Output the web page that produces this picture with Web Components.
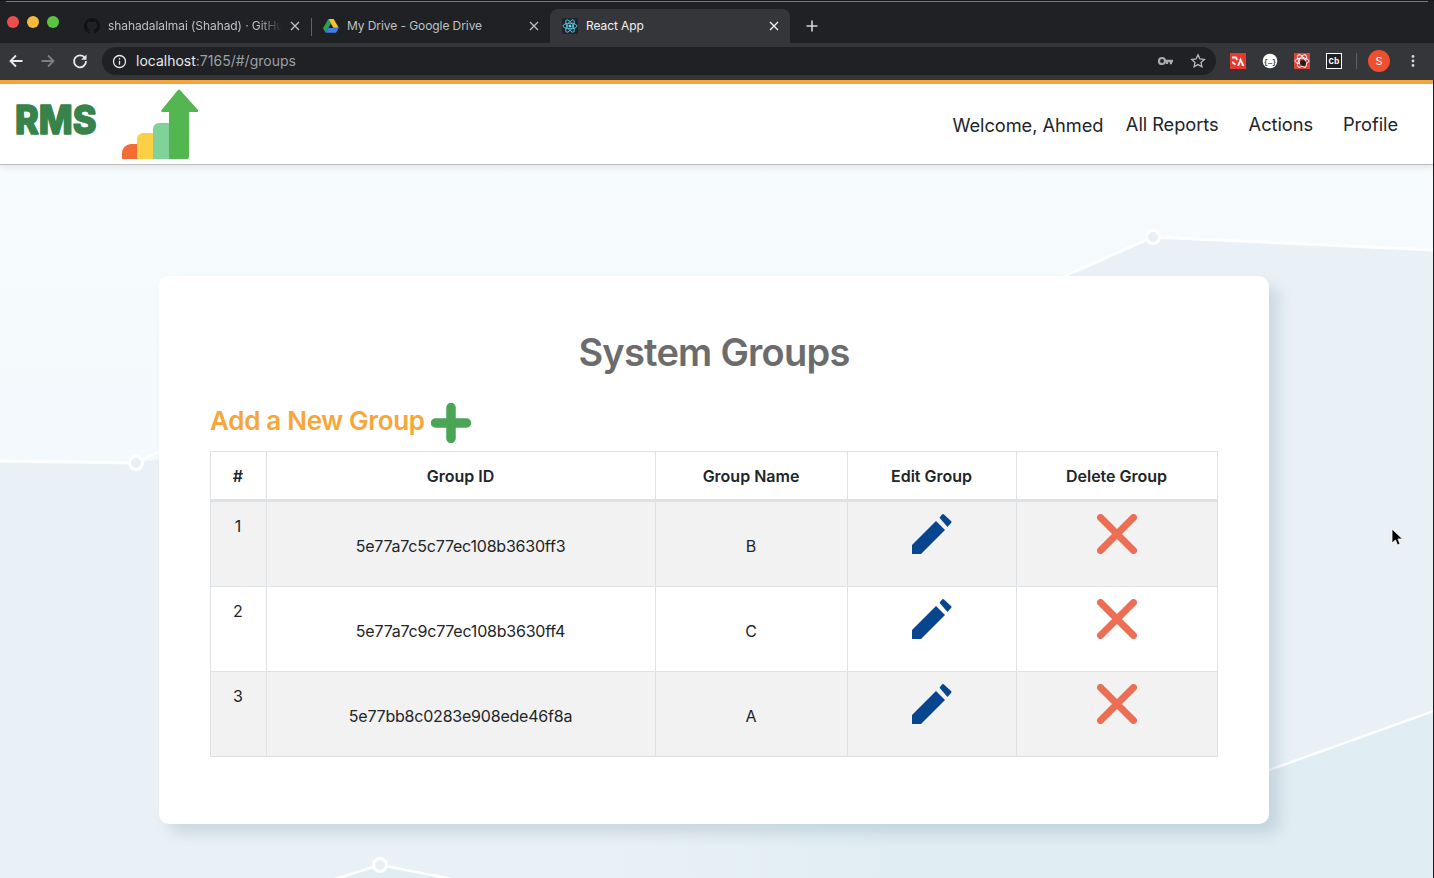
<!DOCTYPE html>
<html>
<head>
<meta charset="utf-8">
<title>React App</title>
<style>
  html,body{margin:0;height:100%;overflow:hidden;background:#e9f1f7;}
  body{font-family:Inter,"Liberation Sans",sans-serif;}
</style>
</head>
<body>

<browser-frame>
  <browser-tab slot="tabs" style="width:235px;padding-left:8px" closed-fade>
    <svg slot="icon" width="16" height="16" viewBox="0 0 16 16"><path fill="#111214" d="M8 0a8 8 0 0 0-2.5 15.6c.4.1.5-.2.5-.4v-1.400c-2.200.5-2.700-1-2.700-1-.4-.9-.9-1.200-.9-1.200-.7-.5.1-.5.1-.5.8.1 1.200.8 1.200.8.7 1.200 1.900.9 2.300.7.1-.5.3-.9.5-1.100-1.800-.2-3.600-.9-3.600-4 0-.9.3-1.600.8-2.100-.1-.2-.4-1 .1-2.100 0 0 .7-.2 2.200.8a7.600 7.600 0 0 1 4 0c1.500-1 2.200-.8 2.200-.8.5 1.100.2 1.900.1 2.100.5.5.8 1.200.8 2.100 0 3.100-1.900 3.800-3.700 4 .3.3.6.8.6 1.500v2.200c0 .2.1.5.6.4A8 8 0 0 0 8 0z"/></svg>
    shahadalalmai (Shahad) · GitHub
  </browser-tab>
  <browser-tab slot="tabs" style="width:239px" separated>
    <svg slot="icon" width="16" height="16" viewBox="0 0 16 16"><path fill="#f6c02d" d="M5.300 1h5.400l5 8.700h-5.400z"/><path fill="#2f9e55" d="M5.300 1 0 10.200l2.700 4.600L8 5.600z"/><path fill="#3f7ee8" d="M5.200 10h10.500l-2.700 4.800H2.700z"/></svg>
    My Drive - Google Drive
  </browser-tab>
  <browser-tab slot="tabs" style="width:240px" active>
    <svg slot="icon" width="16" height="16" viewBox="0 0 16 16"><rect width="16" height="16" rx="1" fill="#20232a"/><g fill="none" stroke="#61dafb" stroke-width=".8"><ellipse cx="8" cy="8" rx="7" ry="2.800"/><ellipse cx="8" cy="8" rx="7" ry="2.800" transform="rotate(60 8 8)"/><ellipse cx="8" cy="8" rx="7" ry="2.800" transform="rotate(120 8 8)"/></g><circle cx="8" cy="8" r="1.500" fill="#61dafb"/></svg>
    React App
  </browser-tab>
</browser-frame>

<app-nav user="Ahmed">
  <nav-link>All Reports</nav-link>
  <nav-link>Actions</nav-link>
  <nav-link>Profile</nav-link>
</app-nav>

<page-body>
  <groups-card heading="System Groups">
    <group-row head index="#" group-id="Group ID" group-name="Group Name" edit="Edit Group" del="Delete Group"></group-row>
    <group-row striped index="1" group-id="5e77a7c5c77ec108b3630ff3" group-name="B"></group-row>
    <group-row index="2" group-id="5e77a7c9c77ec108b3630ff4" group-name="C"></group-row>
    <group-row striped last index="3" group-id="5e77bb8c0283e908ede46f8a" group-name="A"></group-row>
  </groups-card>
</page-body>

<window-edge></window-edge>

<script>
class BrowserFrame extends HTMLElement {
  constructor(){
    super();
    this.attachShadow({ mode:"open" });
    this.shadowRoot.innerHTML = `
      <style>
        :host{display:block;background:#202124;font:12px Inter,"Liberation Sans",sans-serif;color:#e8eaed;}
        .strip{height:43px;box-sizing:border-box;border-top:1px solid #17181a;display:flex;align-items:flex-start;position:relative;}
        .strip::before{content:"";position:absolute;left:6px;right:6px;top:0;height:1px;background:#77797c;}
        .lights{width:76px;flex:none;display:flex;gap:8px;padding:15px 0 0 7px;box-sizing:border-box;}
        .lights i{width:12px;height:12px;border-radius:50%;}
        .tabs{display:flex;margin-top:8px;}
        .plus{margin:18px 0 0 15px;width:14px;height:14px;}
        .bar{height:37px;box-sizing:border-box;background:#35363a;display:flex;align-items:flex-start;padding-top:4px;position:relative;}
        .nav{display:flex;align-items:center;gap:16px;width:102px;height:28px;padding-left:8px;box-sizing:border-box;flex:none;}
        .omni{width:1114px;height:28px;border-radius:14px;background:#202124;display:flex;align-items:center;box-sizing:border-box;padding:0 10px;flex:none;font-size:14px;line-height:26px;}
        .url{margin-left:9px;color:#9aa0a6;padding-bottom:1px;}
        .url b{font-weight:400;color:#e8eaed;}
        .omni .right{margin-left:auto;display:flex;gap:17px;align-items:center;}
        .ext{display:flex;align-items:center;margin-left:14px;height:28px;gap:16px;}
        .ext svg{display:block;}
        .ext text{font-family:"Liberation Mono",monospace;font-weight:700;}
        .sep{width:1px;height:16px;background:#5f6368;margin:0 -2px 0 -2px;}
        .avatar{width:22px;height:22px;border-radius:50%;background:#ee4f2f;color:#fff;font-size:11px;display:flex;align-items:center;justify-content:center;margin-left:-3px;}
        .dots{margin-left:5px;}
        .rule{height:4px;background:#f7a63a;}
      </style>
      <div class="strip">
        <div class="lights"><i style="background:#ed4f4c"></i><i style="background:#f4b93e"></i><i style="background:#5ac53f"></i></div>
        <div class="tabs"><slot name="tabs"></slot></div>
        <svg class="plus" viewBox="0 0 14 14"><path d="M7 1.500v11M1.500 7h11" stroke="#d5d6d8" stroke-width="1.600"/></svg>
      </div>
      <div class="bar">
        <div class="nav">
          <svg width="16" height="16" viewBox="0 0 16 16" fill="none" stroke="#e8eaed" stroke-width="1.800"><path d="M14.500 8H2.500M8 2.500 2.500 8 8 13.500"/></svg>
          <svg width="16" height="16" viewBox="0 0 16 16" fill="none" stroke="#7d7f83" stroke-width="1.800"><path d="M1.500 8h12M8 2.500 13.500 8 8 13.500"/></svg>
          <svg width="16" height="16" viewBox="0 0 16 16"><path d="M13 5A6 6 0 1 0 14 8" fill="none" stroke="#e8eaed" stroke-width="1.800"/><path d="M14.500 1.500v5.300H9.200z" fill="#e8eaed"/></svg>
        </div>
        <div class="omni">
          <svg width="15" height="15" viewBox="0 0 15 15" fill="none" stroke="#e8eaed" stroke-width="1.300"><circle cx="7.500" cy="7.500" r="6"/><path d="M7.500 6.700v4M7.500 4v1.400"/></svg>
          <span class="url"><b>localhost</b>:7165/#/groups</span>
          <span class="right">
            <svg width="15" height="10" viewBox="0 0 15 10"><circle cx="4" cy="5" r="3" fill="none" stroke="#a9abae" stroke-width="2.200"/><path d="M7 3.800h8v2.400h-1v2h-2.200v-2H10V8H8V6.200H7z" fill="#a9abae"/></svg>
            <svg width="16" height="16" viewBox="0 0 16 16" fill="none" stroke="#b9babd" stroke-width="1.300"><path d="m8 1.800 1.900 4.100 4.400.5-3.300 3 .9 4.400L8 11.600l-3.900 2.200.9-4.400-3.300-3 4.400-.5z"/></svg>
          </span>
        </div>
        <div class="ext">
          <svg width="16" height="16" viewBox="0 0 16 16"><rect width="16" height="16" fill="#e8392f"/><path d="M2 3.500h4.500L8 6.500 6.500 7.500 5.300 5.400H2zM2 8l4 3-1 1.300-3-2.300zM7.200 13l3.200-8.500L14.500 13h-2.200l-1.800-4-1.500 4z" fill="#fff"/></svg>
          <svg width="16" height="16" viewBox="0 0 16 16"><circle cx="8" cy="8" r="7.300" fill="#fff"/><text x="8" y="10.500" font-size="7" text-anchor="middle" fill="#333">{…}</text></svg>
          <svg width="16" height="16" viewBox="0 0 16 16"><rect width="16" height="16" fill="#d9443d"/><g fill="none" stroke="#fff" stroke-width="1"><ellipse cx="8" cy="8" rx="7" ry="3"/><ellipse cx="8" cy="8" rx="7" ry="3" transform="rotate(60 8 8)"/><ellipse cx="8" cy="8" rx="7" ry="3" transform="rotate(120 8 8)"/></g><circle cx="9" cy="10" r="3" fill="#2a1a1a"/></svg>
          <svg width="16" height="16" viewBox="0 0 16 16"><rect x=".5" y=".5" width="15" height="15" fill="#202124" stroke="#fff"/><text x="8" y="11" font-size="9" text-anchor="middle" fill="#fff">Cb</text></svg>
          <span class="sep"></span>
          <span class="avatar">S</span>
          <svg class="dots" width="4" height="14" viewBox="0 0 4 14" fill="#d5d6d8"><circle cx="2" cy="2.500" r="1.400"/><circle cx="2" cy="7" r="1.400"/><circle cx="2" cy="11.500" r="1.400"/></svg>
        </div>
      </div>
      <div class="rule"></div>
    `;
  }
}
customElements.define("browser-frame", BrowserFrame);

class BrowserTab extends HTMLElement {
  constructor(){
    super();
    this.attachShadow({ mode:"open" });
    this.shadowRoot.innerHTML = `
      <style>
        :host{display:inline-flex;height:34px;box-sizing:border-box;align-items:center;padding:0 11px 0 12px;position:relative;color:#bdc1c6;font-size:12px;vertical-align:top;letter-spacing:-.08px;}
        :host([active]){background:#35363a;color:#f1f3f4;border-radius:8px 8px 0 0;height:39px;padding-bottom:5px;}
        :host([separated])::before{content:"";position:absolute;left:0;top:9px;height:18px;width:1px;background:#5f6368;}
        .icon{display:flex;width:16px;flex:none;margin-right:8px;}
        .label{flex:1;white-space:nowrap;overflow:hidden;min-width:0;padding-bottom:2px;}
        :host([closed-fade]) .label{-webkit-mask-image:linear-gradient(90deg,#000 86%,transparent);}
        svg{flex:none;margin-left:8px;}
      </style>
      <span class="icon"><slot name="icon"></slot></span>
      <span class="label"><slot></slot></span>
      <svg width="10" height="10" viewBox="0 0 10 10"><path d="m1 1 8 8M9 1 1 9" stroke="currentColor" stroke-width="1.300"/></svg>
    `;
  }
}
customElements.define("browser-tab", BrowserTab);

class AppNav extends HTMLElement {
  constructor(){
    super();
    this.attachShadow({ mode:"open" });
    this.shadowRoot.innerHTML = `
      <style>
        :host{display:flex;height:81px;box-sizing:border-box;background:#fff;border-bottom:1px solid #bdbfc0;box-shadow:0 2px 7px rgba(0,0,0,.1);align-items:center;position:relative;z-index:1;}
        .brand{display:flex;align-items:flex-start;height:80px;flex:none;}
        .word{display:block;width:122px;height:80px;flex:none;}
        .word text{font:800 40px Inter,"Liberation Sans",sans-serif;fill:#37834a;stroke:#37834a;stroke-width:1.600px;stroke-linejoin:round;}
        .mark{margin-top:5px;display:block;}
        .links{margin-left:auto;display:flex;align-items:center;padding-right:36px;font-size:18.240px;color:#212529;}
        .welcome{margin-right:22.500px;padding-top:2px;letter-spacing:-.05px;}
        ::slotted(nav-link){margin-left:30px;}
        ::slotted(nav-link:first-child){margin-left:0;}
      </style>
      <div class="brand">
        <svg class="word" viewBox="0 0 122 80"><text x="15" y="50" textLength="81.500" lengthAdjust="spacingAndGlyphs">RMS</text></svg>
        <svg class="mark" width="76" height="71" viewBox="0 0 76 71">
          <path d="M0 70V64a9 9 0 0 1 9-9h7v15z" fill="#f26d36"/>
          <path d="M15 70V50a6 6 0 0 1 6-6h12v26z" fill="#fbd044"/>
          <path d="M31 70V40a6 6 0 0 1 6-6h13v36z" fill="#7fd29a"/>
          <path d="M47 70V23H40.500q-2 0-1-2L56 1q1-1 2 0l18 20q1 2-1 2H67v45q0 2-2 2z" fill="#54b650"/>
        </svg>
      </div>
      <div class="links">
        <span class="welcome">Welcome, ${this.getAttribute("user")}</span>
        <slot></slot>
      </div>
    `;
  }
}
customElements.define("app-nav", AppNav);

class NavLink extends HTMLElement {
  constructor(){
    super();
    this.attachShadow({ mode:"open" });
    this.shadowRoot.innerHTML = `
      <style>:host{display:block;color:#212529;font-size:18.240px;letter-spacing:-.05px;}</style>
      <slot></slot>
    `;
  }
}
customElements.define("nav-link", NavLink);

class PageBody extends HTMLElement {
  constructor(){
    super();
    this.attachShadow({ mode:"open" });
    this.shadowRoot.innerHTML = `
      <style>
        :host{display:block;position:relative;height:713px;box-sizing:border-box;padding:111px 0 0 159px;overflow:hidden;background:#e9f1f7;}
        .art{position:absolute;left:0;top:0;}
        ::slotted(*){position:relative;}
        .cursor{position:absolute;left:1391px;top:363px;}
      </style>
      <svg class="art" width="1434" height="713" viewBox="0 165 1434 713">
        <defs>
          <linearGradient id="top" x1="0" y1="0" x2="0" y2="1"><stop offset="0" stop-color="#f7fbfd"/><stop offset="1" stop-color="#f3f9fc"/></linearGradient>
          <linearGradient id="low" gradientUnits="userSpaceOnUse" x1="600" y1="0" x2="900" y2="0"><stop offset="0" stop-color="#e9f1f7"/><stop offset="1" stop-color="#e0edf3"/></linearGradient>
        </defs>
        <path d="M0 165H1434V250L1153 237 900 350 136 463 0 461z" fill="url(#top)"/>
        <path d="M1434 711 1200 795 600 810V878H1434z" fill="url(#low)"/>
        <path d="M380 865 470 884H330z" fill="#e0edf3"/>
        <g fill="none" stroke="#fff" stroke-opacity=".92">
          <path d="M0 461 136 463M136 463 164 449M1065 276 1153 237M1153 237 1434 250" stroke-width="3"/>
          <path d="M1434 711 1230 784" stroke-width="2.500"/>
          <path d="M380 865 332 880M380 865 462 881" stroke-width="2.500"/>
        </g>
        <g fill="#e8f0f5" stroke="#fff" stroke-width="3">
          <circle cx="136" cy="463" r="6.500"/>
          <circle cx="1153" cy="237" r="6.500"/>
          <circle cx="380" cy="865" r="6.500"/>
        </g>
      </svg>
      <slot></slot>
      <svg class="cursor" width="12" height="19" viewBox="0 0 12 19"><path d="M1 1v14l3.500-3 2 5 2.500-1-2-5h4.500z" fill="#000" stroke="#fff" stroke-width=".8"/></svg>
    `;
  }
}
customElements.define("page-body", PageBody);

class WindowEdge extends HTMLElement {
  constructor(){
    super();
    this.attachShadow({ mode:"open" });
    this.shadowRoot.innerHTML = `
      <style>:host{display:block;position:fixed;right:0;top:80px;bottom:0;width:1px;background:#1c1c1e;z-index:5;}</style>
    `;
  }
}
customElements.define("window-edge", WindowEdge);

class GroupsCard extends HTMLElement {
  constructor(){
    super();
    this.attachShadow({ mode:"open" });
    this.shadowRoot.innerHTML = `
      <style>
        :host{display:block;width:1110px;height:548px;box-sizing:border-box;background:#fff;border-radius:10px;padding:51px 51px 0;box-shadow:10px 10px 14px rgba(50,80,100,.15);}
        h1{margin:0;font:560 38px/50px Inter,"Liberation Sans",sans-serif;letter-spacing:-.75px;color:#6c6c6c;text-align:center;}
        .add{display:flex;align-items:center;height:40px;margin-top:25px;font:560 26px/40px Inter,"Liberation Sans",sans-serif;letter-spacing:-.3px;color:#f7a63a;gap:6px;}
        .add span{padding-bottom:3px;}
        .add svg{display:block;margin-top:2px;}
        .table{margin-top:9px;width:1008px;}
      </style>
      <h1>${this.getAttribute("heading")}</h1>
      <div class="add"><span>Add a New Group</span>
        <svg width="40" height="40" viewBox="0 0 40 40"><path d="M20 4.500v31M4.500 20h31" stroke="#4aa655" stroke-width="9.500" stroke-linecap="round"/></svg>
      </div>
      <div class="table"><slot></slot></div>
    `;
  }
}
customElements.define("groups-card", GroupsCard);

class GroupRow extends HTMLElement {
  constructor(){
    super();
    this.attachShadow({ mode:"open" });
    const head = this.hasAttribute("head");
    const a = n => this.getAttribute(n) || "";
    const pencil = `<svg width="40" height="40" viewBox="0 0 40 40" fill="#07468f"><path d="M0 31 24 7l9 9L9 40H0z"/><path d="M27.500 3.700 30 .5q1-1 2 0l7 6.500q1 1 0 2L35.500 13z"/></svg>`;
    const cross = `<svg width="40" height="40" viewBox="0 0 40 40"><path d="m3.500 3.500 33 33M36.500 3.500l-33 33" stroke="#ec6f55" stroke-width="7" stroke-linecap="round"/></svg>`;
    this.shadowRoot.innerHTML = `
      <style>
        :host{display:grid;grid-template-columns:56px 389px 192px 169px 202px;font:16px/24px Inter,"Liberation Sans",sans-serif;color:#212529;}
        :host([striped]) .c{background:#f2f2f2;}
        .c{box-sizing:border-box;height:85px;border-left:1px solid #dee2e6;border-top:1px solid #dee2e6;display:flex;justify-content:center;padding:32px 1px 0 0;}
        .c:last-child{border-right:1px solid #dee2e6;}
        .n{padding-top:12px;}
        .i{padding:12px 0 0;}
        .id{letter-spacing:-.21px;}
        svg{display:block;}
        :host([last]) .c{height:86px;border-bottom:1px solid #dee2e6;}
        :host([head]) .c{height:50px;padding:12px 1px 0 0;font-weight:600;border-bottom:2px solid #dee2e6;letter-spacing:0;}
      </style>
      <div class="c n">${a("index")}</div>
      <div class="c id">${a("group-id")}</div>
      <div class="c">${a("group-name")}</div>
      <div class="c i">${head ? a("edit") : pencil}</div>
      <div class="c i">${head ? a("del") : cross}</div>
    `;
  }
}
customElements.define("group-row", GroupRow);
</script>
</body>
</html>
